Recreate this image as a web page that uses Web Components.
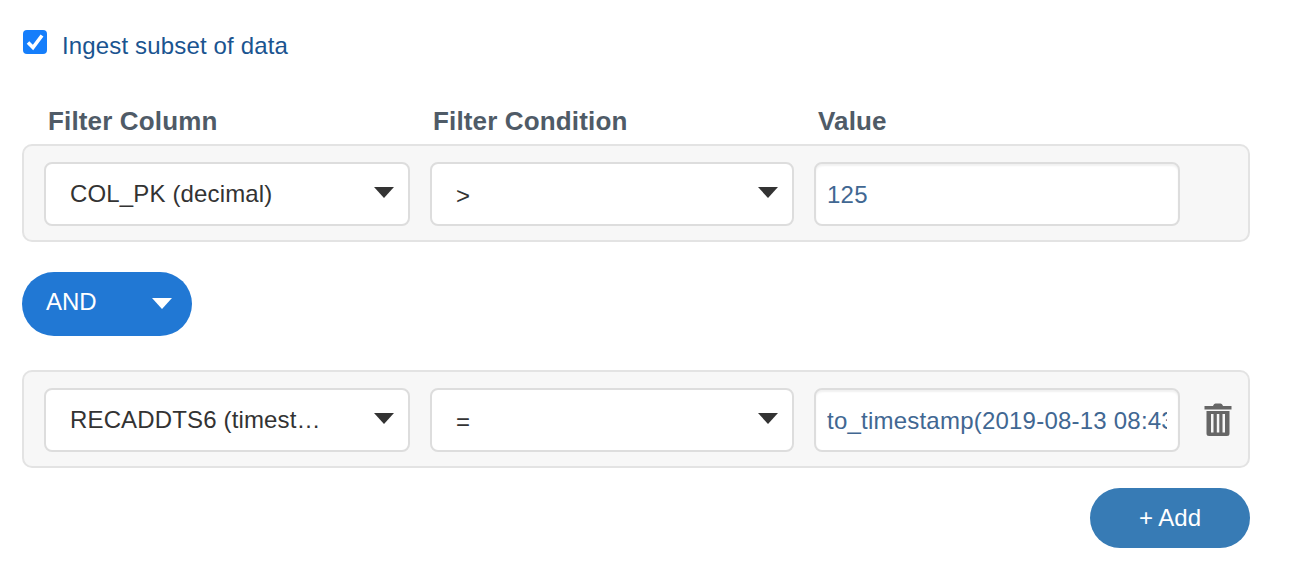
<!DOCTYPE html>
<html lang="en">
<head>
<meta charset="utf-8">
<title>Ingest subset of data</title>
<style>
  html, body { margin: 0; background: #fff; }
  body { font-family: "Liberation Sans", Arial, sans-serif; }
</style>
</head>
<body>
<filter-form>
  <subset-check>Ingest subset of data</subset-check>
  <filter-heads></filter-heads>
  <filter-row column="COL_PK (decimal)" condition="&gt;" value="125"></filter-row>
  <logic-pill>AND</logic-pill>
  <filter-row column="RECADDTS6 (timest…" condition="=" value="to_timestamp(2019-08-13 08:43:21)" removable></filter-row>
  <add-button>+ Add</add-button>
</filter-form>

<script>
const formTemplate = document.createElement('template');
formTemplate.innerHTML = `
<style>
  :host {
    display: flex;
    flex-direction: column;
    width: 1228px;
    height: 586px;
    box-sizing: border-box;
    margin-left: 22px;
    padding-top: 30px;
  }
  ::slotted(filter-heads) { margin-top: 50px; }
  ::slotted(logic-pill) { margin-top: 30px; margin-bottom: 34px; }
  ::slotted(add-button) { margin-top: 20px; align-self: flex-end; }
</style>
<slot></slot>
`;

const checkTemplate = document.createElement('template');
checkTemplate.innerHTML = `
<style>
  :host {
    display: flex;
    align-items: center;
    gap: 15px;
    height: 24px;
    padding-left: 1px;
    color: #1a5490;
    font-size: 24px;
  }
  #box {
    flex: none;
    width: 24px;
    height: 24px;
    border-radius: 4px;
    background: #157efb;
  }
  svg { display: block; }
  span { position: relative; top: 4px; letter-spacing: 0.15px; }
</style>
<div id="box">
  <svg viewBox="0 0 24 24" width="24" height="24" fill="none" stroke="#fff" stroke-width="3.6">
    <path d="M5 12.5 L10 17.5 L19 5.5"></path>
  </svg>
</div>
<span><slot></slot></span>
`;

const headsTemplate = document.createElement('template');
headsTemplate.innerHTML = `
<style>
  :host {
    display: grid;
    grid-template-columns: 385px 385px auto;
    height: 40px;
    padding-left: 26px;
    color: #4f5b67;
    font-size: 26px;
    font-weight: bold;
    letter-spacing: 0.15px;
    line-height: 28px;
    padding-top: 3px;
    box-sizing: border-box;
  }
</style>
<div>Filter Column</div>
<div>Filter Condition</div>
<div>Value</div>
`;

const rowTemplate = document.createElement('template');
rowTemplate.innerHTML = `
<style>
  :host {
    display: flex;
    align-items: flex-start;
    box-sizing: border-box;
    height: 98px;
    padding: 16px 20px;
    border: 2px solid #e3e3e3;
    border-radius: 10px;
    background: #f7f7f7;
    font-size: 24px;
  }
  .field {
    flex: none;
    box-sizing: border-box;
    height: 64px;
    border: 2px solid #ddd;
    border-radius: 8px;
    background: #fff;
    display: flex;
    align-items: center;
    white-space: nowrap;
    overflow: hidden;
  }
  .select {
    justify-content: space-between;
    padding: 0 14px 0 24px;
    color: #333;
    margin-right: 20px;
    letter-spacing: 0.15px;
  }
  #column { width: 366px; }
  #condition { width: 364px; }
  #value {
    width: 366px;
    padding: 0 11px;
    color: #416792;
    letter-spacing: 0.22px;
    box-shadow: inset 0 2px 2px rgba(0, 0, 0, 0.06);
  }
  #value span { display: block; overflow: hidden; position: relative; top: 1px; }
  #condition-text { position: relative; top: 2px; }
  .caret {
    flex: none;
    width: 0;
    height: 0;
    border-left: 10px solid transparent;
    border-right: 10px solid transparent;
    border-top: 11px solid #333;
    margin-top: -4px;
  }
  #remove { flex: none; margin: 15px 0 0 23px; display: none; }
  :host([removable]) #remove { display: block; }
</style>
<div class="field select" id="column"><span id="column-text"></span><i class="caret"></i></div>
<div class="field select" id="condition"><span id="condition-text"></span><i class="caret"></i></div>
<div class="field" id="value"><span id="value-text"></span></div>
<svg id="remove" viewBox="0 0 30 34" width="30" height="34" fill="#666">
  <path d="M10.5 2 Q11 0.5 12.5 0.5 H17.5 Q19 0.5 19.5 2 L20 3 H28.5 V6.5 H1.5 V3 H10 Z"></path>
  <path fill-rule="evenodd" d="M3.5 8 H26.5 V30.5 Q26.5 33 24 33 H6 Q3.5 33 3.5 30.5 Z M8 11 V29.5 H10.5 V11 Z M13.8 11 V29.5 H16.3 V11 Z M19.5 11 V29.5 H22 V11 Z"></path>
</svg>
`;

const pillTemplate = document.createElement('template');
pillTemplate.innerHTML = `
<style>
  :host {
    display: flex;
    align-items: center;
    justify-content: space-between;
    box-sizing: border-box;
    width: 170px;
    height: 64px;
    padding: 0 20px 0 24px;
    border-radius: 32px;
    background: #2178d4;
    color: #fff;
    font-size: 24px;
  }
  span { position: relative; top: -2px; }
  i {
    width: 0;
    height: 0;
    border-left: 10px solid transparent;
    border-right: 10px solid transparent;
    border-top: 11px solid #fff;
    margin-top: -2px;
  }
</style>
<span><slot></slot></span>
<i></i>
`;

const addTemplate = document.createElement('template');
addTemplate.innerHTML = `
<style>
  :host {
    display: flex;
    align-items: center;
    justify-content: center;
    width: 160px;
    height: 60px;
    border-radius: 30px;
    background: #377bb5;
    color: #fff;
    font-size: 24px;
  }
</style>
<slot></slot>
`;

// plain wrappers: same thing each time, only the template differs
function simpleElement(name, template) {
  customElements.define(name, class extends HTMLElement {
    constructor() {
      super();
      this.attachShadow({ mode: 'open' });
      this.shadowRoot.appendChild(template.content.cloneNode(true));
    }
  });
}

simpleElement('filter-form', formTemplate);
simpleElement('subset-check', checkTemplate);
simpleElement('filter-heads', headsTemplate);
simpleElement('logic-pill', pillTemplate);
simpleElement('add-button', addTemplate);

class FilterRow extends HTMLElement {
  constructor() {
    super();
    this.attachShadow({ mode: 'open' });
    this.shadowRoot.appendChild(rowTemplate.content.cloneNode(true));
  }

  connectedCallback() {
    for (const key of ['column', 'condition', 'value']) {
      this.shadowRoot.getElementById(key + '-text').textContent = this.getAttribute(key);
    }
  }
}

customElements.define('filter-row', FilterRow);
</script>
</body>
</html>
